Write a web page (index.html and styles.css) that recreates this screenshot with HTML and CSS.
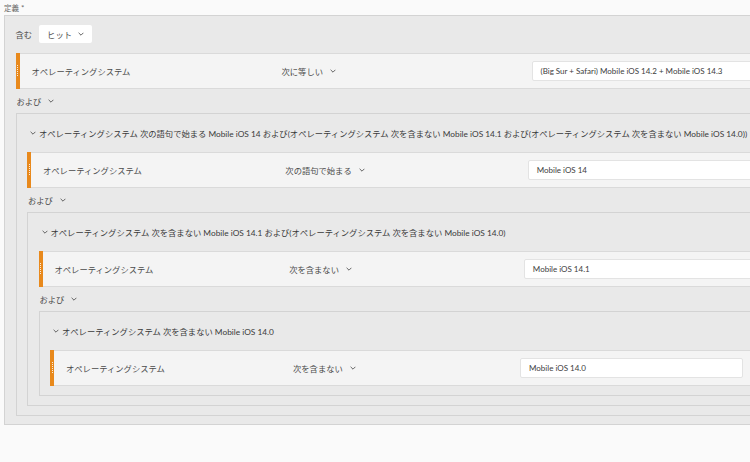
FILE: index.html
```html
<!DOCTYPE html>
<html lang="ja">
<head>
<meta charset="utf-8">
<title>定義</title>
<link rel="stylesheet" href="styles.css">
</head>
<body>
<div class="page">
  <div class="label">定義 <span class="req">*</span></div>
  <div class="box outer">
    <div class="include-row">
      <span class="include-label">含む</span>
      <div class="dropdown">ヒット <svg class="chev" viewBox="0 0 10 6"><polyline points="1,1 5,5 9,1"/></svg></div>
    </div>

    <div class="cond">
      <div class="handle"></div>
      <div class="fields">
        <span class="field">オペレーティングシステム</span>
        <span class="op">次に等しい <svg class="chev" viewBox="0 0 10 6"><polyline points="1,1 5,5 9,1"/></svg></span>
        <div class="value">(Big Sur + Safari) Mobile iOS 14.2 + Mobile iOS 14.3</div>
      </div>
    </div>
    <div class="conj">および <svg class="chev" viewBox="0 0 10 6"><polyline points="1,1 5,5 9,1"/></svg></div>

    <div class="box group">
      <div class="group-head"><svg class="chev" viewBox="0 0 10 6"><polyline points="1,1 5,5 9,1"/></svg><span>オペレーティングシステム 次の語句で始まる Mobile iOS 14 および(オペレーティングシステム 次を含まない Mobile iOS 14.1 および(オペレーティングシステム 次を含まない Mobile iOS 14.0))</span></div>
      <div class="cond">
        <div class="handle"></div>
        <div class="fields">
          <span class="field">オペレーティングシステム</span>
          <span class="op">次の語句で始まる <svg class="chev" viewBox="0 0 10 6"><polyline points="1,1 5,5 9,1"/></svg></span>
          <div class="value">Mobile iOS 14</div>
        </div>
      </div>
      <div class="conj">および <svg class="chev" viewBox="0 0 10 6"><polyline points="1,1 5,5 9,1"/></svg></div>

      <div class="box group">
        <div class="group-head"><svg class="chev" viewBox="0 0 10 6"><polyline points="1,1 5,5 9,1"/></svg><span>オペレーティングシステム 次を含まない Mobile iOS 14.1 および(オペレーティングシステム 次を含まない Mobile iOS 14.0)</span></div>
        <div class="cond">
          <div class="handle"></div>
          <div class="fields">
            <span class="field">オペレーティングシステム</span>
            <span class="op">次を含まない <svg class="chev" viewBox="0 0 10 6"><polyline points="1,1 5,5 9,1"/></svg></span>
            <div class="value">Mobile iOS 14.1</div>
          </div>
        </div>
        <div class="conj">および <svg class="chev" viewBox="0 0 10 6"><polyline points="1,1 5,5 9,1"/></svg></div>

        <div class="box group">
          <div class="group-head"><svg class="chev" viewBox="0 0 10 6"><polyline points="1,1 5,5 9,1"/></svg><span>オペレーティングシステム 次を含まない Mobile iOS 14.0</span></div>
          <div class="cond">
            <div class="handle"></div>
            <div class="fields">
              <span class="field">オペレーティングシステム</span>
              <span class="op">次を含まない <svg class="chev" viewBox="0 0 10 6"><polyline points="1,1 5,5 9,1"/></svg></span>
              <div class="value">Mobile iOS 14.0</div>
            </div>
          </div>
        </div>
      </div>
    </div>
  </div>
</div>
</body>
</html>
```

FILE: styles.css
```css
html, body {
  margin: 0;
  padding: 0;
  overflow: hidden;
  background: #fafafa;
}

body {
  font-family: "Lato", "Noto Sans CJK JP", sans-serif;
  font-size: 8.3px;
  color: #4b4b4b;
}

.page {
  width: 820px;
}

.label {
  height: 15px;
  display: flex;
  align-items: center;
  padding-left: 4px;
  font-size: 7.5px;
  color: #6a6a6a;
}

.req {
  margin-left: 2px;
  font-size: 8px;
}

.box {
  box-sizing: border-box;
  border: 1px solid #d3d3d3;
  background: #e9e9e9;
}

.outer {
  margin-left: 4px;
  width: 797px;
  padding: 9px 10.5px 8px 10.5px;
}

.group {
  padding: 0 10.5px 9px 10.5px;
}

.include-row {
  height: 18px;
  display: flex;
  align-items: center;
  gap: 7px;
  margin-bottom: 10px;
}

.include-label {
  color: #4b4b4b;
}

.dropdown {
  height: 18px;
  box-sizing: border-box;
  padding: 0 8px;
  display: flex;
  align-items: center;
  gap: 6px;
  background: #ffffff;
  border-radius: 2px;
  color: #505050;
}

.chev {
  width: 6px;
  height: 4px;
  fill: none;
  stroke: #555;
  stroke-width: 1.5;
  flex: none;
}

.cond {
  height: 36px;
  display: flex;
  background: #f4f4f4;
  box-shadow: inset 0 1px #dadada, inset 0 -1px #dadada;
}

.handle {
  width: 4px;
  flex: none;
  background: #e8891c;
  position: relative;
}

.handle::after {
  content: "";
  position: absolute;
  left: 1.5px;
  top: 12px;
  width: 1px;
  height: 12px;
  background: repeating-linear-gradient(to bottom, rgba(255, 255, 255, 0.85) 0 1px, transparent 1px 2px);
}

.fields {
  flex: 1;
  display: grid;
  grid-template-columns: repeat(3, 1fr);
  align-items: center;
  padding: 0 8px 0 12px;
  min-width: 0;
}

.field {
  color: #4b4b4b;
}

.op {
  display: flex;
  align-items: center;
  gap: 7px;
  color: #4b4b4b;
}

.value {
  height: 20px;
  box-sizing: border-box;
  display: flex;
  align-items: center;
  margin-right: 4px;
  padding: 0 8px;
  background: #ffffff;
  border: 1px solid #e3e3e3;
  border-radius: 2px;
  color: #3c3c3c;
  font-size: 8px;
  white-space: nowrap;
  overflow: hidden;
}

.conj {
  height: 24px;
  display: flex;
  align-items: center;
  gap: 7px;
  padding-left: 1px;
  color: #4b4b4b;
}

.group-head {
  height: 38px;
  display: flex;
  align-items: center;
  gap: 3px;
  padding-left: 3px;
  white-space: nowrap;
  color: #3a3a3a;
}
```
